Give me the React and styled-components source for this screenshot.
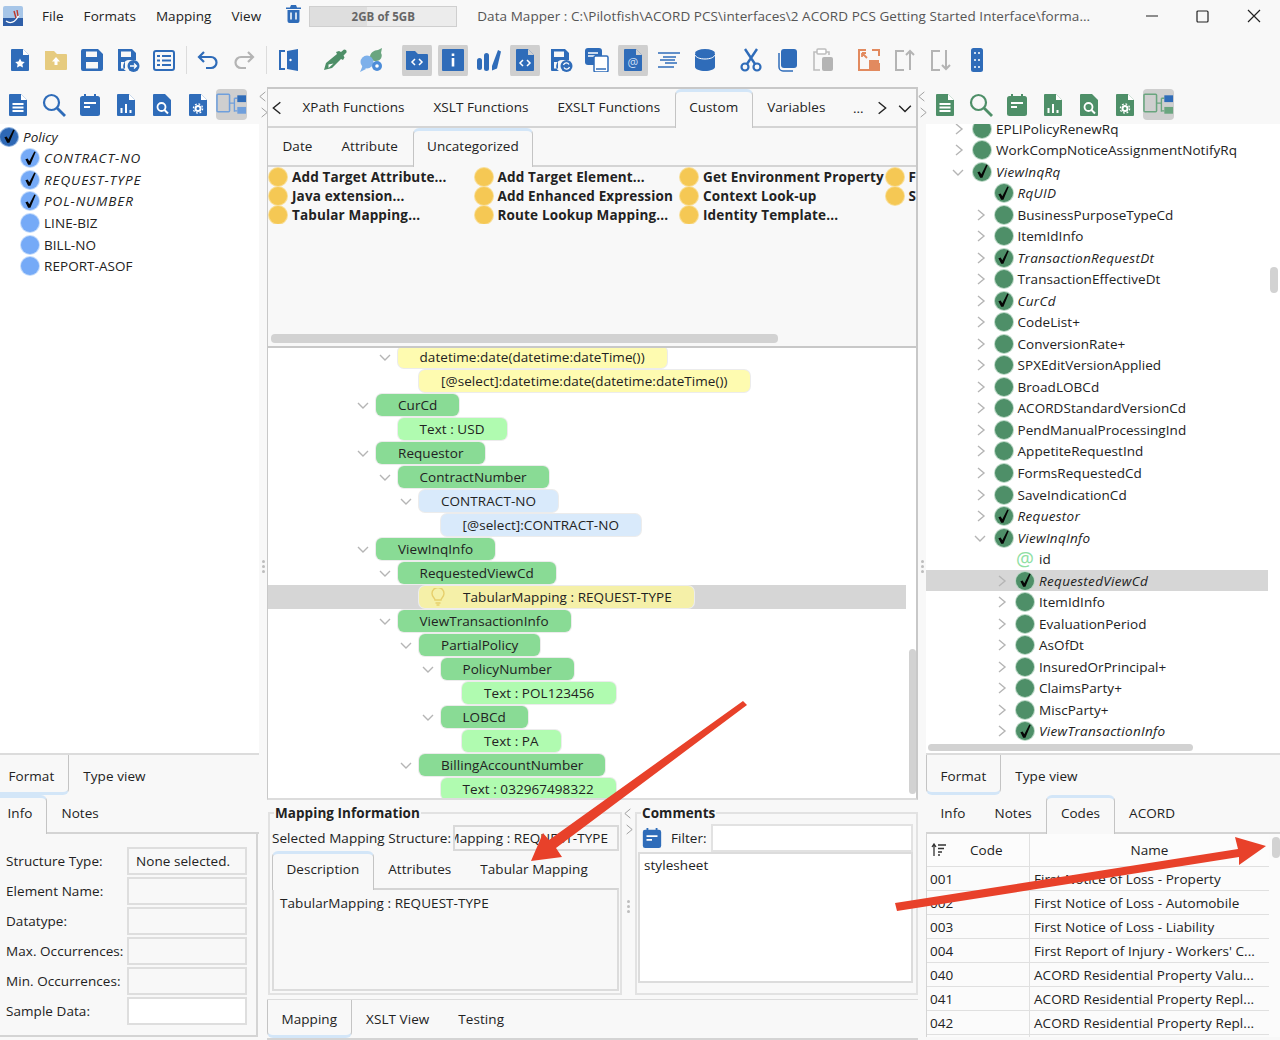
import { createGlobalStyle, styled } from 'styled-components';

const BLUE = '#2f6cb9';
const GREEN = '#4e8f68';
const GREY = '#b4b4b4';

const GlobalStyle = createGlobalStyle`
  html, body {
    margin: 0;
    padding: 0;
    background: #f8f8f8;
  }
  * {
    box-sizing: border-box;
  }
  body {
    font-family: 'Open Sans', 'Noto Sans', sans-serif;
    font-size: 13.5px;
    letter-spacing: 0.06px;
    color: #222;
  }
`;

const Page = styled.div`
  position: relative;
  width: 1280px;
  height: 1040px;
  overflow: hidden;
  background: #f8f8f8;
  display: flex;
  flex-direction: column;
`;

const TitleBar = styled.header`
  height: 32px;
  display: flex;
  align-items: center;
  padding-left: 3px;
  flex: none;
`;

const MenuItem = styled.span`
  margin-left: ${(p) => p.$gap}px;
`;

const MemoryBar = styled.div`
  width: 148px;
  height: 21px;
  margin-left: 8px;
  border: 1px solid #cfcfcf;
  background: linear-gradient(90deg, #dedede 39%, #ececec 39%);
  color: #666;
  font-size: 11.5px;
  font-weight: 700;
  display: flex;
  align-items: center;
  justify-content: center;
`;

const TitleText = styled.div`
  margin-left: 20px;
  width: 625px;
  color: #555;
  white-space: nowrap;
  overflow: hidden;
`;

const WindowButton = styled.div`
  width: 50px;
  display: flex;
  justify-content: center;
`;

const MainToolbar = styled.div`
  height: 56px;
  flex: none;
  display: flex;
  align-items: center;
  padding: 0 0 0 2px;
`;

const ToolButton = styled.div`
  width: ${(p) => p.$w || 36}px;
  height: 31px;
  flex: none;
  display: flex;
  align-items: center;
  justify-content: center;
  border-radius: 4px;
  border: 0 solid transparent;
  border-left-width: ${(p) => (p.$w ? 0 : 3)}px;
  border-right-width: ${(p) => (p.$w ? 0 : 3)}px;
  background-clip: padding-box;
  background-color: ${(p) => (p.$active ? '#cfcfcf' : 'transparent')};
`;

const ToolSep = styled.div`
  width: 8px;
  height: 28px;
  flex: none;
  display: flex;
  justify-content: center;
  &::after {
    content: '';
    width: 1px;
    background: #dcdcdc;
  }
`;

const ToolGap = styled.div`
  width: ${(p) => p.$w}px;
  flex: none;
`;

const Workspace = styled.div`
  flex: 1;
  min-height: 0;
  display: grid;
  grid-template-columns: 259px 8px 651px 8px 354px;
`;

const Column = styled.section`
  display: flex;
  flex-direction: column;
  min-width: 0;
  min-height: 0;
`;

const PaneToolbar = styled.div`
  height: 36px;
  flex: none;
  display: flex;
  align-items: center;
  padding-left: ${(p) => p.$pad}px;
  padding-bottom: 3px;
`;

const Splitter = styled.div`
  display: flex;
  flex-direction: column;
  align-items: center;
  gap: 5px;
  padding-top: 3px;
`;

const SplitDots = styled.div`
  margin-top: ${(p) => p.$top}px;
  display: flex;
  flex-direction: column;
  gap: 2px;
  span {
    width: 3px;
    height: 3px;
    border-radius: 50%;
    background: #bdbdbd;
  }
`;

const TreePane = styled.div`
  height: 631px;
  flex: none;
  background: #fff;
  border-bottom: 2px solid #dcdcdc;
  overflow: hidden;
  position: relative;
`;

const LeftList = styled.div`
  padding-top: 2px;
`;

const LeftRow = styled.div`
  height: 21.55px;
  display: flex;
  align-items: center;
  gap: 5px;
  padding-left: ${(p) => (p.$root ? 0 : 21)}px;
  font-style: ${(p) => (p.$italic ? 'italic' : 'normal')};
  letter-spacing: ${(p) => (p.$italic && !p.$root ? 0.9 : 0.06)}px;
`;

const DotMark = styled.span`
  width: 18px;
  height: 18px;
  border-radius: 50%;
  flex: none;
  background: ${(p) => p.$color};
  box-shadow: 0 0 0 1px ${(p) => p.$ring};
  display: flex;
  align-items: center;
  justify-content: center;
`;

const TreeScroll = styled.div`
  margin-top: -6px;
`;

const SchemaRow = styled.div`
  height: 21.52px;
  width: 342px;
  display: flex;
  align-items: center;
  padding-left: ${(p) => 26 + p.$level * 21.5}px;
  background: ${(p) => (p.$selected ? '#d6d6d6' : 'transparent')};
  font-style: ${(p) => (p.$italic ? 'italic' : 'normal')};
  letter-spacing: ${(p) => (p.$italic ? 0.3 : 0.06)}px;
`;

const ChevronSlot = styled.span`
  width: 12px;
  height: 14px;
  flex: none;
  margin-right: 9px;
  display: flex;
  align-items: center;
  justify-content: center;
`;

const SchemaLabel = styled.span`
  margin-left: 5px;
  white-space: nowrap;
`;

const AtMark = styled.span`
  width: 18px;
  text-align: center;
  color: #8fe0a3;
  font-size: 20px;
  line-height: 18px;
  flex: none;
`;

const ScrollThumb = styled.div`
  position: absolute;
  background: #d2d2d2;
  border-radius: 4px;
  left: ${(p) => p.$x}px;
  top: ${(p) => p.$y}px;
  width: ${(p) => p.$w}px;
  height: ${(p) => p.$h}px;
`;

const TabRow = styled.div`
  height: ${(p) => p.$h || 39}px;
  flex: none;
  display: flex;
  align-items: stretch;
  margin-left: ${(p) => p.$shift || 0}px;
  border-bottom: ${(p) => (p.$flat ? 'none' : '2px solid #d4d4d4')};
  position: relative;
`;

const Tab = styled.div`
  padding: ${(p) => p.$dip || 0}px 14.5px 1px;
  display: flex;
  align-items: center;
  white-space: nowrap;
  flex: none;
  ${(p) =>
    p.$active &&
    `
    background: #f8f8f8;
    border: 1px solid #c4c4c4;
    border-${p.$strip === 'bottom' ? 'top' : 'bottom'}: none;
    border-${p.$strip || 'top'}: 3px solid #d3e6f8;
    border-${p.$strip || 'top'}-left-radius: 6px;
    border-${p.$strip || 'top'}-right-radius: 6px;
    margin-bottom: ${p.$strip === 'bottom' ? 0 : -2}px;
    padding: ${p.$strip === 'bottom' ? 2 + (p.$dip || 0) : 0}px 13.5px ${p.$strip === 'bottom' ? 0 : 6}px;
  `}
`;

const CenterHead = styled.div`
  border-top: 2px solid #c8c8c8;
  border-left: 1px solid #c8c8c8;
  border-right: 2px solid #c8c8c8;
  border-bottom: 2px solid #c8c8c8;
  margin-top: -1px;
  height: 261px;
  flex: none;
  display: flex;
  flex-direction: column;
  position: relative;
  overflow: hidden;
`;

const TabArrow = styled.span`
  width: ${(p) => p.$w}px;
  flex: none;
  display: flex;
  align-items: center;
  justify-content: center;
`;

const TabSpring = styled.span`
  margin-left: ${(p) => p.$gap}px;
  display: flex;
  align-items: center;
`;

const FunctionGrid = styled.div`
  display: grid;
  grid-template-columns: repeat(4, 205.5px);
  padding: 0 0 0 1px;
  overflow: hidden;
`;

const FunctionColumn = styled.div`
  display: flex;
  flex-direction: column;
`;

const FunctionRow = styled.div`
  height: 19px;
  display: flex;
  align-items: center;
  gap: 5px;
  font-weight: 700;
  letter-spacing: 0.15px;
  white-space: nowrap;
`;

const MappingPane = styled.div`
  height: 452px;
  flex: none;
  background: #fff;
  border-left: 1px solid #c8c8c8;
  border-right: 2px solid #c8c8c8;
  border-bottom: 2px solid #dcdcdc;
  overflow: hidden;
  position: relative;
`;

const MappingScroll = styled.div`
  margin-top: -3px;
`;

const MappingRow = styled.div`
  height: 24px;
  width: 638px;
  display: flex;
  align-items: center;
  padding-left: ${(p) => 89 + p.$level * 21.5}px;
  background: ${(p) => (p.$selected ? '#d6d6d6' : 'transparent')};
`;

const MapChevron = styled.span`
  width: 19px;
  flex: none;
  display: flex;
  justify-content: flex-start;
`;

const Pill = styled.span`
  height: 22px;
  display: flex;
  align-items: center;
  gap: 18px;
  padding: 0 22px;
  padding-left: ${(p) => (p.$bulb ? 12 : 22)}px;
  border-radius: 6px;
  white-space: nowrap;
  background: ${(p) => p.$bg};
  box-shadow: 0 0 0 1px #ececec;
`;

const InfoRow = styled.div`
  flex: 1;
  display: flex;
  min-height: 0;
`;

const GroupBox = styled.div`
  position: relative;
  border: 2px solid #e2e2e2;
  margin-top: 12px;
  height: 183px;
  width: ${(p) => p.$w}px;
  flex: none;
  padding: 10px ${(p) => p.$inset}px 0;
  margin-left: ${(p) => p.$left}px;
`;

const GroupTitle = styled.div`
  position: absolute;
  top: -10px;
  left: 4px;
  padding: 0 1px;
  background: #f8f8f8;
  font-weight: 700;
  line-height: 18px;
`;

const GroupGutter = styled.div`
  width: 13px;
  flex: none;
  display: flex;
  flex-direction: column;
  align-items: center;
  padding-top: 5px;
`;

const FieldLine = styled.div`
  display: flex;
  align-items: center;
  height: 27px;
  white-space: nowrap;
`;

const ClippedField = styled.div`
  width: 166px;
  height: 26px;
  margin-left: auto;
  margin-right: -1px;
  flex: none;
  border: 2px solid #d9d9d9;
  background: #f8f8f8;
  display: flex;
  align-items: center;
  justify-content: flex-end;
  overflow: hidden;
  white-space: nowrap;
  padding-right: 9px;
`;

const InnerBox = styled.div`
  height: 103px;
  margin-right: -1px;
  border: 2px solid #dcdcdc;
  border-top-color: #d4d4d4;
  padding: 4px 6px;
`;

const FilterLine = styled.div`
  display: flex;
  align-items: center;
  height: 28px;
  padding-left: 4px;
`;

const FilterLabel = styled.span`
  margin-left: 8px;
`;

const FilterInput = styled.div`
  width: 202px;
  height: 28px;
  margin-left: auto;
  margin-right: 3px;
  border: 2px solid #e2e2e2;
  background: #fff;
`;

const CommentBox = styled.div`
  height: 131px;
  margin: 0 3px 0 1px;
  background: #fff;
  border: 2px solid #dcdcdc;
  padding: 2px 4px;
`;

const FormBox = styled.div`
  flex: 1;
  margin-right: 1px;
  margin-bottom: 3px;
  border: 2px solid #d4d4d4;
  border-top: none;
  border-left: none;
  padding: 13px 9px 0 6px;
  display: flex;
  flex-direction: column;
  gap: 2px;
`;

const FormRow = styled.div`
  height: 28px;
  display: flex;
  align-items: center;
  justify-content: space-between;
  white-space: nowrap;
`;

const FormValue = styled.div`
  width: 120px;
  height: 28px;
  border: 2px solid #dedede;
  background: ${(p) => (p.$white ? '#fff' : '#f8f8f8')};
  display: flex;
  align-items: center;
  padding-left: 7px;
`;

const CodesTable = styled.div`
  flex: 1;
  min-height: 0;
  margin-bottom: 3px;
  overflow: hidden;
  position: relative;
  background: #fbfbfb;
  border-left: 1px solid #d4d4d4;
`;

const CodesRow = styled.div`
  display: grid;
  grid-template-columns: 103px 239px;
  height: 24px;
  border-bottom: 1px solid #e0e0e0;
  width: 342px;
`;

const CodesHead = styled(CodesRow)`
  height: 33px;
  background: #fcfcfc;
`;

const CodeCell = styled.div`
  display: flex;
  align-items: center;
  padding-left: ${(p) => p.$pad ?? 3}px;
  justify-content: ${(p) => (p.$center ? 'center' : 'flex-start')};
  border-right: ${(p) => (p.$rule ? '1px solid #e0e0e0' : 'none')};
  white-space: nowrap;
  overflow: hidden;
`;

const FootBar = styled.div`
  height: 41px;
  flex: none;
  display: flex;
  border-top: 1px solid #dcdcdc;
  border-bottom: 2px solid #d4d4d4;
`;

const Overlay = styled.svg`
  position: absolute;
  top: 0;
  left: 0;
  pointer-events: none;
`;

function Chevron({ dir = 'right', color = '#b5b5b5', size = 12, width = 1.4 }) {
  const d = {
    right: 'M4 1l6 5-6 5',
    left: 'M8 1L2 6l6 5',
    down: 'M1 4l5 5 5-5',
  }[dir];
  return (
    <svg width={size} height={size} viewBox="0 0 12 12" fill="none" stroke={color} strokeWidth={width}>
      <path d={d} />
    </svg>
  );
}

function Tick() {
  return (
    <svg width="17" height="17" viewBox="0 0 16 16">
      <path d="M3.200 8.800l2.100-.9 1.600 2.800L11.600 1.300l1.300.6-5 11.900H5.800z" fill="#050505" />
    </svg>
  );
}

const DOC = 'M4 1h11l6 6v15a1 1 0 0 1-1 1H4a1 1 0 0 1-1-1V2a1 1 0 0 1 1-1z';

const ICONS = {
  newDoc: (c) => (
    <>
      <path d={DOC} fill={c} />
      <path d="M15 1v6h6z" fill="#fff" />
      <path d="M12 10.500l1.500 3 3.300.5-2.400 2.300.6 3.200-3-1.500-3 1.500.6-3.200L7.200 14l3.300-.5z" fill="#fff" />
    </>
  ),
  folderUp: () => (
    <>
      <path d="M1 3h9l3 3h9a1 1 0 0 1 1 1v14a1 1 0 0 1-1 1H2a1 1 0 0 1-1-1z" fill="#e6cb7f" />
      <path d="M12 9l4 4.500h-2.500V17h-3v-3.500H8z" fill="#fff" />
    </>
  ),
  save: (c) => (
    <path
      d="M3 1h15l5 5v15a2 2 0 0 1-2 2H3a2 2 0 0 1-2-2V3a2 2 0 0 1 2-2zm3 2.500V9h11V3.500zM6 14v6.500h12V14z"
      fill={c}
      fillRule="evenodd"
    />
  ),
  saveAs: (c) => (
    <>
      <path d="M2 1h14l4 4v7h-6a6 6 0 0 0-4 11H3a1 1 0 0 1-1-1zm3 2.500V9h10V3.500zM5 14v6.500h4V14z" fill={c} fillRule="evenodd" />
      <circle cx="17.500" cy="18" r="6" fill={c} />
      <path d="M14 18h6m-2-2.500l2.500 2.500-2.500 2.500" stroke="#fff" strokeWidth="1.300" fill="none" />
    </>
  ),
  list: (c) => (
    <>
      <rect x="2" y="3" width="20" height="19" rx="2" fill="none" stroke={c} strokeWidth="2" />
      <path d="M5 8h3M10 8h9M5 12.500h3M10 12.500h9M5 17h3M10 17h9" stroke={c} strokeWidth="2" />
    </>
  ),
  undo: (c) => (
    <path d="M8 4L3 9l5 5M3 9h12a5.500 5.500 0 0 1 0 11h-5" fill="none" stroke={c} strokeWidth="2.200" />
  ),
  redo: (c) => (
    <path d="M16 4l5 5-5 5M21 9H9a5.500 5.500 0 0 0 0 11h5" fill="none" stroke={c} strokeWidth="2.200" />
  ),
  door: (c) => (
    <>
      <path d="M8 3h-5v18h5" fill="none" stroke={c} strokeWidth="2" />
      <path d="M10 3l11-2v22l-11-2z" fill={c} />
      <circle cx="13.500" cy="12" r="1.200" fill="#fff" />
    </>
  ),
  dropper: (c) => (
    <>
      <path d="M1 22l2-7L14 6l-1-2 3-1 2 1 3-2.500c2 0 3 1 2.500 3l-3 3 1 2-1.500 2.500-2-1L9 20z" fill={c} />
      <path d="M5.500 16.500l5-1-5 4.500z" fill="#fff" />
    </>
  ),
  cluster: () => (
    <>
      <path d="M11 9c0-4 4-7 8-7l4-2-1 5c2 3 0 8-5 8-4 0-6-2-6-4z" fill="#6aa57f" />
      <circle cx="8" cy="14" r="6.500" fill="#7db0ea" />
      <path d="M4 17l-3 7 6-3z" fill="#7db0ea" />
      <circle cx="18" cy="18" r="5" fill="#4c8cd8" />
      <circle cx="18" cy="18" r="1.800" fill="#fff" />
    </>
  ),
  folderCode: (c) => (
    <>
      <path d="M1 3h9l3 3h9a1 1 0 0 1 1 1v14a1 1 0 0 1-1 1H2a1 1 0 0 1-1-1z" fill={c} />
      <path d="M10 11l-3 3 3 3M14 11l3 3-3 3" fill="none" stroke="#fff" strokeWidth="1.500" />
    </>
  ),
  info: (c) => (
    <>
      <rect x="1" y="1" width="22" height="22" rx="1" fill={c} />
      <path d="M10.700 5.500h2.600v2.600h-2.600zM10.700 10h2.600v8.500h-2.600z" fill="#fff" />
    </>
  ),
  bars: (c) => (
    <>
      <rect x="0" y="10" width="5" height="12" rx="2.500" fill={c} />
      <rect x="7" y="5" width="5" height="18" rx="2.500" fill={c} />
      <path d="M15 18L21 2l3 1.500-4 17-5 2z" fill={c} />
    </>
  ),
  docCode: (c) => (
    <>
      <path d={DOC} fill={c} />
      <path d="M15 1v6h6z" fill="#cfcfcf" />
      <path d="M10 12l-3 3 3 3M14 12l3 3-3 3" fill="none" stroke="#fff" strokeWidth="1.500" />
    </>
  ),
  saveSync: (c) => (
    <>
      <path d="M2 1h14l4 4v7h-6a6 6 0 0 0-4 11H3a1 1 0 0 1-1-1zm3 2.500V9h10V3.500zM5 14v6.500h4V14z" fill={c} fillRule="evenodd" />
      <circle cx="17.500" cy="18" r="6" fill={c} />
      <path d="M14.500 17a3 3 0 0 1 5.500-.5M20.500 19a3 3 0 0 1-5.500.5" stroke="#fff" strokeWidth="1.300" fill="none" />
    </>
  ),
  copyDoc: (c) => (
    <>
      <rect x="0" y="0" width="17" height="17" rx="3" fill={c} />
      <path d="M3 5h10M3 8h7" stroke="#fff" strokeWidth="1.400" />
      <rect x="9" y="8" width="14" height="16" rx="1.500" fill="#fff" stroke={c} strokeWidth="1.500" />
      <path d="M11 21h10" stroke={c} strokeWidth="1.500" />
    </>
  ),
  docAt: (c) => (
    <>
      <path d={DOC} fill={c} />
      <path d="M15 1v6h6z" fill="#cfcfcf" />
      <text x="12" y="19" textAnchor="middle" fontSize="12" fontFamily="'Open Sans', sans-serif" fill="#c9dcf3">@</text>
    </>
  ),
  lines: (c) => (
    <path d="M1 5h22M6 9h13M3 12h15M8 15h12M1 19h16" stroke={c} strokeWidth="1.500" fill="none" />
  ),
  db: (c) => (
    <>
      <path d="M2 6v13c0 2 4.500 4 10 4s10-2 10-4V6z" fill={c} />
      <ellipse cx="12" cy="5" rx="10" ry="4" fill={c} />
      <path d="M2 7c1 2.500 5 4 10 4s9-1.500 10-4" fill="none" stroke="#fff" strokeWidth="1" />
    </>
  ),
  scissors: (c) => (
    <>
      <circle cx="6" cy="19" r="3.500" fill="none" stroke={c} strokeWidth="2.200" />
      <circle cx="18" cy="19" r="3.500" fill="none" stroke={c} strokeWidth="2.200" />
      <path d="M8 16L18 1M16 16L6 1" stroke={c} strokeWidth="2.400" fill="none" />
    </>
  ),
  copy: (c) => (
    <>
      <rect x="6" y="1" width="16" height="19" rx="3" fill={c} />
      <path d="M4 5v14a4 4 0 0 0 4 4h10" fill="none" stroke={c} strokeWidth="1.500" />
    </>
  ),
  paste: () => (
    <>
      <path d="M6 4H3v18h6M15 4h3v3" fill="none" stroke="#bdbdbd" strokeWidth="1.600" />
      <rect x="6" y="1" width="9" height="5" rx="1" fill="#fff" stroke="#bdbdbd" strokeWidth="1.500" />
      <rect x="11" y="9" width="11" height="14" rx="2" fill="#b4b4b4" />
    </>
  ),
  resize: () => (
    <>
      <path d="M9 2H2v20h20v-7M15 2h7v6" fill="none" stroke="#e28a5f" strokeWidth="2" />
      <rect x="12" y="12" width="10" height="10" fill="#e28a5f" />
      <path d="M5 5l5 5M5 5h4M5 5v4" stroke="#e28a5f" strokeWidth="1.800" fill="none" />
    </>
  ),
  moveUp: (c) => (
    <path d="M11 3H3v19h8M17 22V3m-4 4l4-4 4 4" fill="none" stroke={c} strokeWidth="2" />
  ),
  moveDown: (c) => (
    <path d="M11 3H3v19h8M17 2v19m-4-4l4 4 4-4" fill="none" stroke={c} strokeWidth="2" />
  ),
  strip: (c) => (
    <>
      <rect x="6" y="0" width="12" height="24" rx="2.500" fill={c} />
      <path d="M9 5h2M13 5h2M9 12h2M13 12h2M9 19h2M13 19h2" stroke="#fff" strokeWidth="1.400" />
    </>
  ),
  docText: (c) => (
    <>
      <path d={DOC} fill={c} />
      <path d="M15 1v6h6z" fill="#fff" />
      <path d="M6.500 11h11M6.500 14.500h11M6.500 18h11" stroke="#fff" strokeWidth="1.800" />
    </>
  ),
  search: (c) => (
    <>
      <circle cx="9.500" cy="9.500" r="7.500" fill="none" stroke={c} strokeWidth="2.200" />
      <path d="M15 15l8 8" stroke={c} strokeWidth="2.800" />
    </>
  ),
  calendar: (c) => (
    <>
      <rect x="2" y="3" width="20" height="20" rx="2.500" fill={c} />
      <path d="M7 1v4M17 1v4" stroke={c} strokeWidth="2" />
      <path d="M6 10h12M6 14h6" stroke="#fff" strokeWidth="2" />
    </>
  ),
  docChart: (c) => (
    <>
      <path d={DOC} fill={c} />
      <path d="M15 1v6h6z" fill="#fff" />
      <path d="M7.500 20v-5M12 20v-9M16.500 20v-3" stroke="#fff" strokeWidth="2" />
    </>
  ),
  docSearch: (c) => (
    <>
      <path d={DOC} fill={c} />
      <circle cx="11.500" cy="14" r="4" fill="none" stroke="#fff" strokeWidth="1.800" />
      <path d="M14.500 17l3.500 3.500" stroke="#fff" strokeWidth="2" />
    </>
  ),
  docGear: (c) => (
    <>
      <path d={DOC} fill={c} />
      <path d="M15 1v6h6z" fill="#fff" />
      <circle cx="12" cy="15.500" r="2.500" fill="none" stroke="#fff" strokeWidth="2" />
      <circle cx="12" cy="15.500" r="4.600" fill="none" stroke="#fff" strokeWidth="1.300" strokeDasharray="1.800 1.800" />
    </>
  ),
};

function Icon({ name, color = BLUE, size = 24 }) {
  return (
    <svg width={size} height={size} viewBox="0 0 24 24">
      {ICONS[name](color)}
    </svg>
  );
}

function TreeToggle({ tint, top }) {
  return (
    <svg width="32" height="24" viewBox="0 0 32 24">
      <rect x="1" y="1" width="13" height="18" rx="1" fill="none" stroke={tint} strokeWidth="1.600" />
      <path d="M14 10h5M19 5v14M19 5h3M19 18h3" fill="none" stroke={tint} strokeWidth="1.400" />
      <rect x="22" y="2" width="9" height="7" fill={top} />
      <rect x="22" y="14" width="9" height="7" fill={tint} />
    </svg>
  );
}

function PaneIcons({ color, pad, top }) {
  return (
    <PaneToolbar $pad={pad}>
      {['docText', 'search', 'calendar', 'docChart', 'docSearch', 'docGear'].map((name) => (
        <ToolButton key={name}>
          <Icon name={name} color={color} />
        </ToolButton>
      ))}
      <ToolButton $active $w={31}>
        <TreeToggle tint={color === GREEN ? '#6aa57f' : '#6f9fdc'} top={top} />
      </ToolButton>
    </PaneToolbar>
  );
}

function SplitHandle({ dotsTop }) {
  return (
    <Splitter>
      <Chevron dir="left" color="#999" size={11} width={1} />
      <Chevron dir="right" color="#999" size={11} width={1} />
      <SplitDots $top={dotsTop}>
        <span />
        <span />
        <span />
      </SplitDots>
    </Splitter>
  );
}

const LEFT_FIELDS = [
  ['CONTRACT-NO', true],
  ['REQUEST-TYPE', true],
  ['POL-NUMBER', true],
  ['LINE-BIZ', false],
  ['BILL-NO', false],
  ['REPORT-ASOF', false],
];

const SCHEMA = [
  ['EPLIPolicyRenewRq', 0, 'right'],
  ['WorkCompNoticeAssignmentNotifyRq', 0, 'right'],
  ['ViewInqRq', 0, 'down', true],
  ['RqUID', 1, null, true],
  ['BusinessPurposeTypeCd', 1, 'right'],
  ['ItemIdInfo', 1, 'right'],
  ['TransactionRequestDt', 1, 'right', true],
  ['TransactionEffectiveDt', 1, 'right'],
  ['CurCd', 1, 'right', true],
  ['CodeList+', 1, 'right'],
  ['ConversionRate+', 1, 'right'],
  ['SPXEditVersionApplied', 1, 'right'],
  ['BroadLOBCd', 1, 'right'],
  ['ACORDStandardVersionCd', 1, 'right'],
  ['PendManualProcessingInd', 1, 'right'],
  ['AppetiteRequestInd', 1, 'right'],
  ['FormsRequestedCd', 1, 'right'],
  ['SaveIndicationCd', 1, 'right'],
  ['Requestor', 1, 'right', true],
  ['ViewInqInfo', 1, 'down', true],
  ['id', 2, null, false, 'attr'],
  ['RequestedViewCd', 2, 'right', true, 'selected'],
  ['ItemIdInfo', 2, 'right'],
  ['EvaluationPeriod', 2, 'right'],
  ['AsOfDt', 2, 'right'],
  ['InsuredOrPrincipal+', 2, 'right'],
  ['ClaimsParty+', 2, 'right'],
  ['MiscParty+', 2, 'right'],
  ['ViewTransactionInfo', 2, 'right', true],
];

const PILL = {
  el: '#89db95',
  text: '#b0fbb0',
  fn: '#fefbb0',
  src: '#d9eafb',
  tab: '#f5f0a8',
};

const MAPPING = [
  ['datetime:date(datetime:dateTime())', 1, 'fn', true],
  ['[@select]:datetime:date(datetime:dateTime())', 2, 'fn', false],
  ['CurCd', 0, 'el', true],
  ['Text : USD', 1, 'text', false],
  ['Requestor', 0, 'el', true],
  ['ContractNumber', 1, 'el', true],
  ['CONTRACT-NO', 2, 'src', true],
  ['[@select]:CONTRACT-NO', 3, 'src', false],
  ['ViewInqInfo', 0, 'el', true],
  ['RequestedViewCd', 1, 'el', true],
  ['TabularMapping : REQUEST-TYPE', 2, 'tab', false],
  ['ViewTransactionInfo', 1, 'el', true],
  ['PartialPolicy', 2, 'el', true],
  ['PolicyNumber', 3, 'el', true],
  ['Text : POL123456', 4, 'text', false],
  ['LOBCd', 3, 'el', true],
  ['Text : PA', 4, 'text', false],
  ['BillingAccountNumber', 2, 'el', true],
  ['Text : 032967498322', 3, 'text', false],
];

const FUNCTIONS = [
  ['Add Target Attribute...', 'Java extension...', 'Tabular Mapping...'],
  ['Add Target Element...', 'Add Enhanced Expression', 'Route Lookup Mapping...'],
  ['Get Environment Property', 'Context Look-up', 'Identity Template...'],
  ['F', 'S'],
];

const FORM_FIELDS = [
  ['Structure Type:', 'None selected.'],
  ['Element Name:', ''],
  ['Datatype:', ''],
  ['Max. Occurrences:', ''],
  ['Min. Occurrences:', ''],
  ['Sample Data:', '', true],
];

const CODES = [
  ['001', 'First Notice of Loss - Property'],
  ['002', 'First Notice of Loss - Automobile'],
  ['003', 'First Notice of Loss - Liability'],
  ['004', "First Report of Injury - Workers' C..."],
  ['040', 'ACORD Residential Property Valu...'],
  ['041', 'ACORD Residential Property Repl...'],
  ['042', 'ACORD Residential Property Repl...'],
  ['', ''],
];

function MainTools() {
  return (
    <MainToolbar>
      <ToolButton><Icon name="newDoc" /></ToolButton>
      <ToolButton><Icon name="folderUp" /></ToolButton>
      <ToolButton><Icon name="save" /></ToolButton>
      <ToolButton><Icon name="saveAs" /></ToolButton>
      <ToolButton><Icon name="list" /></ToolButton>
      <ToolSep />
      <ToolButton><Icon name="undo" /></ToolButton>
      <ToolButton><Icon name="redo" color={GREY} /></ToolButton>
      <ToolSep />
      <ToolGap $w={1} />
      <ToolButton><Icon name="door" /></ToolButton>
      <ToolGap $w={10} />
      <ToolButton><Icon name="dropper" color={GREEN} /></ToolButton>
      <ToolButton><Icon name="cluster" /></ToolButton>
      <ToolGap $w={10} />
      <ToolButton $active><Icon name="folderCode" /></ToolButton>
      <ToolButton $active><Icon name="info" /></ToolButton>
      <ToolButton><Icon name="bars" /></ToolButton>
      <ToolButton $active><Icon name="docCode" /></ToolButton>
      <ToolButton><Icon name="saveSync" /></ToolButton>
      <ToolButton><Icon name="copyDoc" /></ToolButton>
      <ToolButton $active><Icon name="docAt" /></ToolButton>
      <ToolButton><Icon name="lines" /></ToolButton>
      <ToolButton><Icon name="db" /></ToolButton>
      <ToolGap $w={10} />
      <ToolButton><Icon name="scissors" /></ToolButton>
      <ToolButton><Icon name="copy" /></ToolButton>
      <ToolButton><Icon name="paste" /></ToolButton>
      <ToolGap $w={10} />
      <ToolButton><Icon name="resize" /></ToolButton>
      <ToolButton><Icon name="moveUp" color={GREY} /></ToolButton>
      <ToolButton><Icon name="moveDown" color={GREY} /></ToolButton>
      <ToolButton><Icon name="strip" /></ToolButton>
    </MainToolbar>
  );
}

function LeftColumn() {
  return (
    <Column>
      <PaneIcons color={BLUE} pad={-3} top={BLUE} />
      <TreePane>
        <LeftList>
          <LeftRow $root $italic>
            <DotMark $color="#2e68b5" $ring="#8fb2de"><Tick /></DotMark>
            Policy
          </LeftRow>
          {LEFT_FIELDS.map(([name, mapped]) => (
            <LeftRow key={name} $italic={mapped}>
              <DotMark $color="#75aaf7" $ring="#c3dbfb">{mapped && <Tick />}</DotMark>
              {name}
            </LeftRow>
          ))}
        </LeftList>
      </TreePane>
      <TabRow $h={40} $flat $shift={-6}>
        <Tab $active $strip="bottom" $dip={3}>Format</Tab>
        <Tab $dip={3}>Type view</Tab>
      </TabRow>
      <TabRow $shift={-7}>
        <Tab $active>Info</Tab>
        <Tab>Notes</Tab>
      </TabRow>
      <FormBox>
        {FORM_FIELDS.map(([label, value, white]) => (
          <FormRow key={label}>
            {label}
            <FormValue $white={white}>{value}</FormValue>
          </FormRow>
        ))}
      </FormBox>
    </Column>
  );
}

function CenterColumn() {
  return (
    <Column>
      <CenterHead>
        <TabRow>
          <TabArrow $w={20}><Chevron dir="left" color="#222" size={14} width={1.2} /></TabArrow>
          <Tab>XPath Functions</Tab>
          <Tab>XSLT Functions</Tab>
          <Tab>EXSLT Functions</Tab>
          <Tab $active>Custom</Tab>
          <Tab>Variables</Tab>
          <TabSpring $gap={13}>...</TabSpring>
          <TabSpring $gap={10}><Chevron dir="right" color="#222" size={14} width={1.2} /></TabSpring>
          <TabSpring $gap={10}><Chevron dir="down" color="#222" size={14} width={1.2} /></TabSpring>
        </TabRow>
        <TabRow>
          <Tab>Date</Tab>
          <Tab>Attribute</Tab>
          <Tab $active>Uncategorized</Tab>
        </TabRow>
        <FunctionGrid>
          {FUNCTIONS.map((column, i) => (
            <FunctionColumn key={i}>
              {column.map((name) => (
                <FunctionRow key={name}>
                  <DotMark $color="#f5c854" $ring="#f8dd95" />
                  {name}
                </FunctionRow>
              ))}
            </FunctionColumn>
          ))}
        </FunctionGrid>
        <ScrollThumb $x={3} $y={245} $w={507} $h={9} />
      </CenterHead>
      <MappingPane>
        <MappingScroll>
          {MAPPING.map(([label, level, kind, open]) => (
            <MappingRow key={label} $level={level} $selected={kind === 'tab'}>
              <MapChevron>{open && <Chevron dir="down" />}</MapChevron>
              <Pill $bg={PILL[kind]} $bulb={kind === 'tab'}>
                {kind === 'tab' && (
                  <svg width="14" height="18" viewBox="0 0 14 18" fill="none" stroke="#e6cf6c" strokeWidth="1.400">
                    <path d="M4 12c0-2-3-3-3-6.500a6 6 0 0 1 12 0C13 9 10 10 10 12zM4.500 15h5M5.500 17h3" />
                  </svg>
                )}
                {label}
              </Pill>
            </MappingRow>
          ))}
        </MappingScroll>
        <ScrollThumb $x={641} $y={301} $w={7} $h={145} />
      </MappingPane>
      <InfoRow>
        <GroupBox $w={354} $left={1} $inset={2}>
          <GroupTitle>Mapping Information</GroupTitle>
          <FieldLine>
            Selected Mapping Structure:
            <ClippedField>TabularMapping : REQUEST-TYPE</ClippedField>
          </FieldLine>
          <TabRow $h={37} $flat>
            <Tab $active>Description</Tab>
            <Tab>Attributes</Tab>
            <Tab>Tabular Mapping</Tab>
          </TabRow>
          <InnerBox>TabularMapping : REQUEST-TYPE</InnerBox>
        </GroupBox>
        <GroupGutter>
          <SplitHandle dotsTop={60} />
        </GroupGutter>
        <GroupBox $w={283} $left={0} $inset={0}>
          <GroupTitle>Comments</GroupTitle>
          <FilterLine>
            <Icon name="calendar" size={22} />
            <FilterLabel>Filter:</FilterLabel>
            <FilterInput />
          </FilterLine>
          <CommentBox>stylesheet</CommentBox>
        </GroupBox>
      </InfoRow>
      <FootBar>
        <Tab $active $strip="bottom" $dip={1}>Mapping</Tab>
        <Tab $dip={1}>XSLT View</Tab>
        <Tab $dip={1}>Testing</Tab>
      </FootBar>
    </Column>
  );
}

function RightColumn() {
  return (
    <Column>
      <PaneIcons color={GREEN} pad={1} top={BLUE} />
      <TreePane>
        <TreeScroll>
          {SCHEMA.map(([label, level, chevron, mapped, flag], i) => (
            <SchemaRow key={i} $level={level} $italic={mapped} $selected={flag === 'selected'}>
              <ChevronSlot>{chevron && <Chevron dir={chevron} />}</ChevronSlot>
              {flag === 'attr' ? (
                <AtMark>@</AtMark>
              ) : (
                <DotMark $color={GREEN} $ring="#b9d6c4">{mapped && <Tick />}</DotMark>
              )}
              <SchemaLabel>{label}</SchemaLabel>
            </SchemaRow>
          ))}
        </TreeScroll>
        <ScrollThumb $x={344} $y={143} $w={8} $h={26} />
        <ScrollThumb $x={2} $y={620} $w={265} $h={7} />
      </TreePane>
      <TabRow $h={40} $flat>
        <Tab $active $strip="bottom" $dip={3}>Format</Tab>
        <Tab $dip={3}>Type view</Tab>
      </TabRow>
      <TabRow>
        <Tab>Info</Tab>
        <Tab>Notes</Tab>
        <Tab $active>Codes</Tab>
        <Tab>ACORD</Tab>
      </TabRow>
      <CodesTable>
        <CodesHead>
          <CodeCell $rule $pad={4}>
            <svg width="15" height="14" viewBox="0 0 15 14">
              <path d="M3 13V2M1 4l2-3 2 3" fill="none" stroke="#333" strokeWidth="1.300" />
              <path d="M7 2h8M7 5.500h6M7 9h4M7 12h2" stroke="#333" strokeWidth="1.400" />
            </svg>
            <TabSpring $gap={24}>Code</TabSpring>
          </CodeCell>
          <CodeCell $center $pad={0}>Name</CodeCell>
        </CodesHead>
        {CODES.map(([code, name], i) => (
          <CodesRow key={i}>
            <CodeCell $rule>{code}</CodeCell>
            <CodeCell $pad={4}>{name}</CodeCell>
          </CodesRow>
        ))}
        <ScrollThumb $x={345} $y={3} $w={8} $h={21} />
      </CodesTable>
    </Column>
  );
}

export default function App() {
  return (
    <Page>
      <GlobalStyle />
      <TitleBar>
        <svg width="21" height="21" viewBox="0 0 21 21">
          <rect x="0" y="0" width="20" height="20" rx="2" fill="#a7c6e8" />
          <rect x="0" y="12" width="20" height="8" fill="#2f5fa8" />
          <path d="M3 15c4 3 9 2 13-6" fill="none" stroke="#fff" strokeWidth="1.300" />
          <path d="M11 5l2 7M14 4l1 6" stroke="#c0392b" strokeWidth="1.400" />
        </svg>
        <MenuItem $gap={18}>File</MenuItem>
        <MenuItem $gap={20}>Formats</MenuItem>
        <MenuItem $gap={20}>Mapping</MenuItem>
        <MenuItem $gap={20}>View</MenuItem>
        <MenuItem $gap={25}>
          <svg width="15" height="18" viewBox="0 0 15 18">
            <path d="M0 2.500h15V4H0zM4 2.500L5 0h5l1 2.500zM1.500 5h12v11a2 2 0 0 1-2 2h-8a2 2 0 0 1-2-2z" fill={BLUE} />
            <path d="M5 7.500v7M10 7.500v7" stroke="#fff" strokeWidth="1.500" />
          </svg>
        </MenuItem>
        <MemoryBar>2GB of 5GB</MemoryBar>
        <TitleText>Data Mapper : C:\Pilotfish\ACORD PCS\interfaces\2 ACORD PCS Getting Started Interface\forma...</TitleText>
        <ToolGap $w={25} />
        <WindowButton>
          <svg width="12" height="12" viewBox="0 0 12 12"><path d="M0 6h12" stroke="#222" /></svg>
        </WindowButton>
        <WindowButton>
          <svg width="13" height="13" viewBox="0 0 13 13"><rect x="1" y="1" width="11" height="11" rx="1" fill="none" stroke="#222" strokeWidth="1.200" /></svg>
        </WindowButton>
        <ToolGap $w={2} />
        <WindowButton>
          <svg width="14" height="14" viewBox="0 0 14 14"><path d="M1 1l12 12M13 1L1 13" stroke="#222" strokeWidth="1.200" /></svg>
        </WindowButton>
      </TitleBar>
      <MainTools />
      <Workspace>
        <LeftColumn />
        <SplitHandle dotsTop={437} />
        <CenterColumn />
        <SplitHandle dotsTop={437} />
        <RightColumn />
      </Workspace>
      <Overlay width="1280" height="1040" viewBox="0 0 1280 1040">
        <path d="M743 701L747 705L556 848L562 857L531 861L543 833L549 840Z" fill="#e8412a" />
        <path d="M895 903L1238 849L1235 837L1266 846L1239 865L1239 857L897 911Z" fill="#e8412a" />
      </Overlay>
    </Page>
  );
}
